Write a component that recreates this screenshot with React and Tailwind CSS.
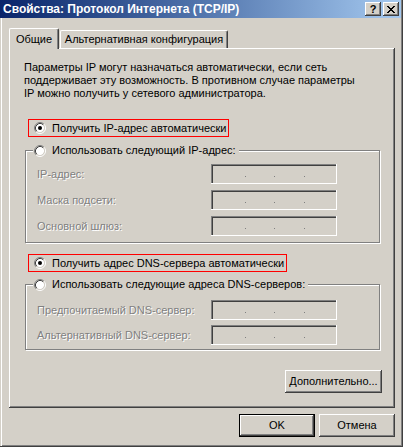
import React from 'react';

// classic win2k radio, 12x12
const Radio = ({ checked }) => (
  <svg width="12" height="12" viewBox="0 0 12 12" className="shrink-0">
    <circle cx="6" cy="6" r="4.2" fill="#fff" />
    <path d="M2.11 9.89 A5.5 5.5 0 0 1 9.89 2.11" fill="none" stroke="#808080" />
    <path d="M9.89 2.11 A5.5 5.5 0 0 1 2.11 9.89" fill="none" stroke="#fff" />
    <path d="M2.82 9.18 A4.5 4.5 0 0 1 9.18 2.82" fill="none" stroke="#404040" />
    <path d="M9.18 2.82 A4.5 4.5 0 0 1 2.82 9.18" fill="none" stroke="#d4d0c8" />
    {checked && <circle cx="6" cy="6" r="2" fill="#000" />}
  </svg>
);

const closeRows = ['11000011', '01100110', '00111100', '00011000', '00111100', '01100110', '11000011'];

const CloseGlyph = () => (
  <svg width="8" height="7" viewBox="0 0 8 7" shapeRendering="crispEdges">
    {closeRows.map((row, y) =>
      row.split('').map((c, x) => (c === '1' ? <rect key={`${x}-${y}`} x={x} y={y} width="1" height="1" fill="#000" /> : null))
    )}
  </svg>
);

const IpBox = () => (
  <div className="flex h-[20px] w-[126px] bg-[#d4d0c8] pt-[12px] shadow-[inset_-1px_-1px_0_#fff,inset_1px_1px_0_#808080,inset_2px_2px_0_#404040]">
    <span className="ml-[34px] h-px w-px bg-[#808080]" />
    <span className="ml-[28px] h-px w-px bg-[#808080]" />
    <span className="ml-[29px] h-px w-px bg-[#808080]" />
  </div>
);

const Field = ({ label }) => (
  <div className="flex items-center pl-[11px]">
    <span className="w-[174px] whitespace-nowrap text-[#808080] [text-shadow:1px_1px_0_#fff]">{label}</span>
    <IpBox />
  </div>
);

const Legend = ({ children }) => (
  <div className="-mt-[7px] ml-[7px] flex h-[13px] w-fit items-center gap-[6px] bg-[#d4d0c8] pl-[1px] pr-[3px]">
    <Radio />
    <span className="whitespace-nowrap">{children}</span>
  </div>
);

export default function App() {
  return (
    <div className="flex h-[447px] w-[403px] flex-col overflow-hidden bg-[#d4d0c8] font-['Liberation_Sans',Arial,sans-serif] text-[11px] leading-[13px] text-black shadow-[inset_-1px_-1px_0_#404040,inset_1px_0_0_#d4d0c8,inset_2px_0_0_#fff,inset_-2px_-2px_0_#808080]">
      {/* title bar */}
      <div className="flex h-[18px] w-[401px] shrink-0 items-center justify-between bg-linear-to-r from-[#0a246a] to-[#a6caf0] pl-[3px] pr-[2px]">
        <span className="whitespace-nowrap text-[12px] font-bold text-white">Свойства: Протокол Интернета (TCP/IP)</span>
        <div className="flex gap-[2px]">
          <div className="flex h-[14px] w-[16px] items-center justify-center bg-[#d4d0c8] text-[11px] font-bold leading-none shadow-[inset_-1px_-1px_0_#404040,inset_1px_1px_0_#fff,inset_-2px_-2px_0_#808080]">
            ?
          </div>
          <div className="flex h-[14px] w-[16px] items-center justify-center bg-[#d4d0c8] shadow-[inset_-1px_-1px_0_#404040,inset_1px_1px_0_#fff,inset_-2px_-2px_0_#808080]">
            <CloseGlyph />
          </div>
        </div>
      </div>

      <div className="pl-[9px]">
        {/* tabs */}
        <div className="mt-[10px] flex h-[20px] items-end">
          <div className="relative z-10 -mb-px flex h-[21px] w-[50px] items-center justify-center rounded-t-[2px] border-t border-r border-l border-t-white border-r-[#404040] border-l-white bg-[#d4d0c8] shadow-[inset_-1px_0_0_#808080]">
            Общие
          </div>
          <div className="ml-px flex h-[18px] w-[168px] items-center justify-center rounded-t-[2px] border-t border-r border-l border-t-white border-r-[#404040] border-l-white shadow-[inset_-1px_0_0_#808080] whitespace-nowrap">
            Альтернативная конфигурация
          </div>
        </div>

        {/* panel */}
        <div className="flex h-[360px] w-[386px] flex-col bg-[#d4d0c8] pt-[13px] pl-[15px] shadow-[inset_-1px_-1px_0_#404040,inset_1px_1px_0_#fff,inset_-2px_-2px_0_#808080]">
          <p className="whitespace-nowrap">
            Параметры IP могут назначаться автоматически, если сеть
            <br />
            поддерживает эту возможность. В противном случае параметры
            <br />
            IP можно получить у сетевого администратора.
          </p>

          <div className="mt-[19px] ml-[4px] flex h-[18px] w-fit items-center gap-[6px] border border-[#ff0000] pr-[2px] pl-[5px]">
            <Radio checked />
            <span className="whitespace-nowrap">Получить IP-адрес автоматически</span>
          </div>

          <div className="mt-[13px] ml-px w-[355px] border border-[#808080] pb-[6px] shadow-[1px_1px_0_#fff,inset_1px_1px_0_#fff]">
            <Legend>Использовать следующий IP-адрес:</Legend>
            <div className="mt-[7px] flex flex-col gap-[6px]">
              <Field label="IP-адрес:" />
              <Field label="Маска подсети:" />
              <Field label="Основной шлюз:" />
            </div>
          </div>

          <div className="mt-[11px] ml-[4px] flex h-[18px] w-fit items-center gap-[6px] border border-[#ff0000] pr-[2px] pl-[5px]">
            <Radio checked />
            <span className="whitespace-nowrap">Получить адрес DNS-сервера автоматически</span>
          </div>

          <div className="mt-[12px] ml-px w-[355px] border border-[#808080] pb-[4px] shadow-[1px_1px_0_#fff,inset_1px_1px_0_#fff]">
            <Legend>Использовать следующие адреса DNS-серверов:</Legend>
            <div className="mt-[9px] flex flex-col gap-[5px]">
              <Field label="Предпочитаемый DNS-сервер:" />
              <Field label="Альтернативный DNS-сервер:" />
            </div>
          </div>

          <div className="mt-[20px] flex justify-end pr-[13px]">
            <button className="flex h-[23px] w-[97px] items-center justify-center whitespace-nowrap bg-[#d4d0c8] shadow-[inset_-1px_-1px_0_#404040,inset_1px_1px_0_#fff,inset_-2px_-2px_0_#808080]">
              Дополнительно...
            </button>
          </div>
        </div>
      </div>

      {/* dialog buttons */}
      <div className="mt-[6px] flex justify-end gap-[4px] pr-[8px]">
        <button className="flex h-[23px] w-[76px] items-center justify-center border border-black bg-[#d4d0c8] shadow-[inset_-1px_-1px_0_#404040,inset_1px_1px_0_#fff,inset_-2px_-2px_0_#808080]">
          OK
        </button>
        <button className="flex h-[23px] w-[76px] items-center justify-center bg-[#d4d0c8] shadow-[inset_-1px_-1px_0_#404040,inset_1px_1px_0_#fff,inset_-2px_-2px_0_#808080]">
          Отмена
        </button>
      </div>
    </div>
  );
}
